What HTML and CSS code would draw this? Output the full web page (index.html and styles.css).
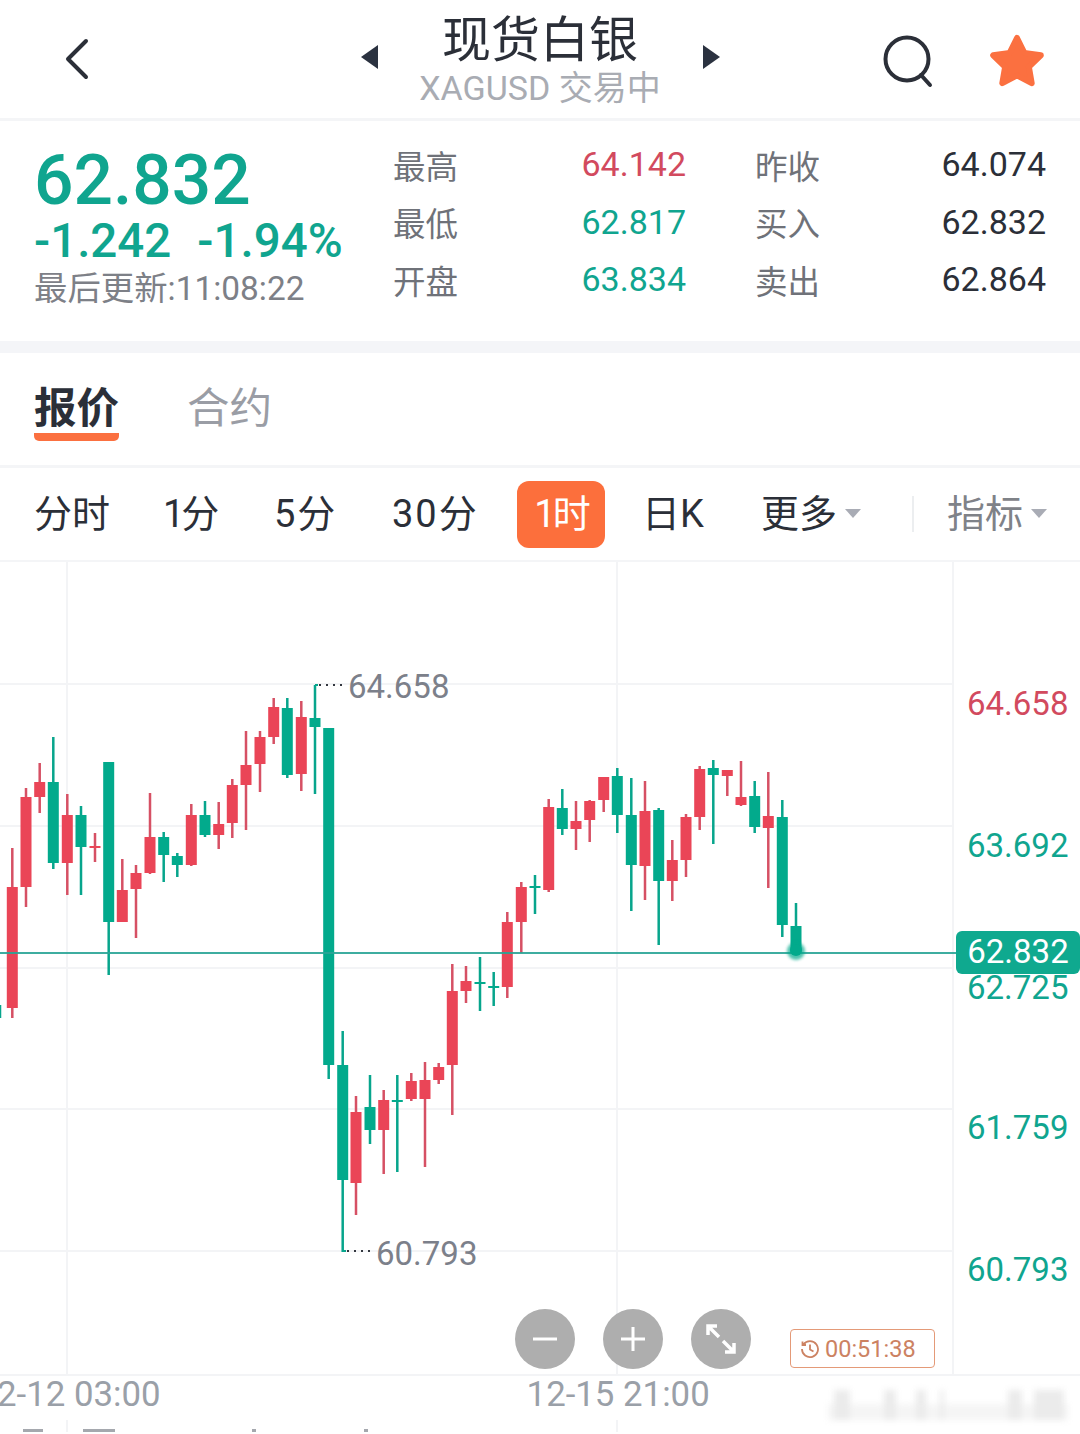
FILE: index.html
```html
<!DOCTYPE html>
<html lang="zh-CN">
<head>
    <meta charset="UTF-8">
    <meta name="viewport" content="width=device-width, initial-scale=1.0">
    <title>现货白银</title>
    <link rel="stylesheet" href="styles.css">
</head>
<body>

    <!-- Header -->
    <header class="top-bar">
        <svg class="icon-back" viewBox="0 0 28 44"><path d="M22 4 4 22l18 18"/></svg>
        <div class="title-group">
            <svg class="arrow" viewBox="0 0 17 24"><path d="M17 0V24L0 12Z"/></svg>
            <div class="title-text">
                <h1>现货白银</h1>
                <p>XAGUSD 交易中</p>
            </div>
            <svg class="arrow" viewBox="0 0 17 24"><path d="M0 0V24L17 12Z"/></svg>
        </div>
        <div class="top-actions">
            <svg class="icon-search" viewBox="0 0 52 54"><circle cx="24" cy="24" r="21.5"/><path d="M38 40 47 50"/></svg>
            <svg class="icon-star" viewBox="0 0 54 56"><path d="M27 5 34.3 19.9 50.8 22.3 38.9 33.9 41.7 50.2 27 42.5 12.3 50.2 15.1 33.9 3.2 22.3 19.7 19.9Z"/></svg>
        </div>
    </header>

    <!-- Quote -->
    <section class="quote">
        <div class="quote-main">
            <div class="price">62.832</div>
            <div class="change"><span>-1.242</span><span>-1.94%</span></div>
            <div class="updated">最后更新:11:08:22</div>
        </div>
        <div class="stats">
            <div class="stat"><span>最高</span><b class="up">64.142</b></div>
            <div class="stat"><span>昨收</span><b>64.074</b></div>
            <div class="stat"><span>最低</span><b class="down">62.817</b></div>
            <div class="stat"><span>买入</span><b>62.832</b></div>
            <div class="stat"><span>开盘</span><b class="down">63.834</b></div>
            <div class="stat"><span>卖出</span><b>62.864</b></div>
        </div>
    </section>

    <!-- Tabs -->
    <nav class="tabs">
        <a class="tab active">报价</a>
        <a class="tab">合约</a>
    </nav>

    <!-- Period -->
    <nav class="periods">
        <a>分时</a>
        <a class="narrow">1分</a>
        <a class="wide">5分</a>
        <a class="wide">30分</a>
        <a class="active narrow">1时</a>
        <a>日K</a>
        <a class="more">更多<i class="caret"></i></a>
        <span class="divider"></span>
        <a class="more muted">指标<i class="caret"></i></a>
    </nav>

    <!-- Chart: viewBox uses page coordinates -->
    <section class="chart">
        <svg class="chart-svg" viewBox="0 562 1080 812">
            <path class="grid" d="M0 684H953M0 826H953M0 968H953M0 1109H953M0 1251H953M67 562V1374M617 562V1374M953 562V1374"/>

            <path class="wick red" d="M12.3 848V1018M26 788V907M39.7 763V813M67.3 794V895M95 833V862M122.3 859V922M136 865V938M150 793V874M191.3 804V866M218.7 802V849M232.3 779V838M246 731V830M260 731V792M273.7 698V744M301.3 701V791M356 1096V1215M383.7 1090V1174M411.3 1073V1101M425 1062V1167M438.7 1063V1084M452.3 964V1115M466 966V1003M507.3 912V998M521.3 882V953M548.7 799V892M576 801V850M589.7 800V842M603.7 777V812M645 781V900M672.3 840V901M686 814V877M699.7 766V830M727.3 770V796M741 761V806M768.3 772V888"/>
            <path class="body red" d="M12.3 887V1008M26 797V887M39.7 782V797M67.3 815V863M95 846V848M122.3 890V922M136 873V889M150 837V873M191.3 815V865M218.7 824V835M232.3 785V823M246 765V785M260 737V764M273.7 707V737M301.3 717V774M356 1112V1183M383.7 1100V1130M411.3 1081V1099M425 1080V1099M438.7 1067V1080M452.3 991V1065M466 981V991M507.3 922V987M521.3 887V922M548.7 807V890M576 821V829M589.7 801V820M603.7 777V800M645 811V866M672.3 860V881M686 817V860M699.7 769V817M727.3 770V776M741 797V805M768.3 816V828"/>

            <path class="wick green" d="M0 1005V1018M53.3 737V869M81 806V895M108.7 922V975M163.7 832V882M177.3 853V877M205 801V837M287.3 698V778M315 685V794M328.7 1065V1079M342.7 1031V1252M370 1075V1144M397.3 1075V1172M480 957V1011M493.7 972V1006M535 875V914M562.3 789V835M617.3 768V833M631.3 778V911M658.7 808V945M713.3 760V844M754.7 781V833M782.3 800V937M796 903V953"/>
            <path class="body green" d="M53.3 782V863M81 815V847M108.7 762V922M163.7 837V855M177.3 856V865M205 815V835M287.3 708V775M315 718V727M328.7 728V1065M342.7 1065V1180M370 1107V1130M397.3 1100V1102M480 982V984M493.7 986V988M535 886V888M562.3 808V829M617.3 776V815M631.3 815V865M658.7 810V881M713.3 768V775M754.7 796V827M782.3 817V925M796 926V953"/>

            <path class="leader" d="M319 685H345M347 1251H372"/>
            <path class="corner" d="M315 685H318M343 1251H346"/>
            <text class="extreme" x="348" y="698">64.658</text>
            <text class="extreme" x="376" y="1265">60.793</text>

            <line class="last-line" x1="0" y1="953" x2="960" y2="953"/>
            <circle class="glow" cx="796" cy="951" r="9"/>
            <circle class="dot" cx="796" cy="950" r="6"/>

            <text class="axis up" x="967" y="715">64.658</text>
            <text class="axis down" x="967" y="857">63.692</text>
            <text class="axis down" x="967" y="999">62.725</text>
            <text class="axis down" x="967" y="1139">61.759</text>
            <text class="axis down" x="967" y="1281">60.793</text>
        </svg>

        <div class="last-tag">62.832</div>

        <div class="zoom-btn minus"><svg viewBox="0 0 60 60"><path d="M18 30H42"/></svg></div>
        <div class="zoom-btn plus"><svg viewBox="0 0 60 60"><path d="M18 30H42M30 18V42"/></svg></div>
        <div class="zoom-btn expand"><svg viewBox="0 0 60 60"><path d="M18 18 28 28M17 26V17H26M32 32 42 42M43 34V43H34"/></svg></div>

        <div class="timer">
            <svg viewBox="0 0 20 20"><path d="M3.5 5.5A8 8 0 1 1 2 10M2.5 2.5V6H6M10 5.5V10.5L13.5 12.5"/></svg>
            <span>00:51:38</span>
        </div>
    </section>

    <!-- Time axis -->
    <footer class="time-axis">
        <span class="time-left">2-12 03:00</span>
        <span class="time-mid">12-15 21:00</span>
        <div class="watermark"><i></i><i></i><i></i><i></i><i></i><i></i><i></i></div>
    </footer>

    <div class="next-panel">
        <i class="v-line l1"></i>
        <i class="v-line l2"></i>
        <i class="sliver s1"></i>
        <i class="sliver s2"></i>
        <i class="sliver s3"></i>
        <i class="sliver s4"></i>
    </div>

</body>
</html>
```

FILE: styles.css
```css
/* General */
* {
    margin: 0;
    padding: 0;
    box-sizing: border-box;
}

body {
    width: 1080px;
    height: 1434px;
    overflow: hidden;
    background: #fff;
    color: #2b2f38;
    font-family: Roboto, "Noto Sans CJK SC", sans-serif;
}

/* Header */
.top-bar {
    height: 121px;
    display: grid;
    grid-template-columns: 1fr auto 1fr;
    align-items: center;
    border-bottom: 3px solid #f4f5f7;
}

.icon-back {
    width: 28px;
    height: 44px;
    margin: 0 0 0 64px;
    fill: none;
    stroke: #2b2f38;
    stroke-width: 4;
    stroke-linecap: round;
    stroke-linejoin: round;
}

.title-group {
    display: flex;
    align-items: center;
    gap: 41px;
}

.arrow {
    width: 17px;
    height: 24px;
    margin-top: -4px;
    fill: #2b3240;
}

.title-text {
    width: 243px;
    margin-top: 4px;
    text-align: center;
}

.title-text h1 {
    font-size: 49px;
    line-height: 54px;
    font-weight: 400;
}

.title-text p {
    font-size: 34px;
    line-height: 40px;
    color: #a9acb3;
    white-space: nowrap;
}

.top-actions {
    display: flex;
    justify-content: flex-end;
    align-items: center;
    gap: 55px;
    padding-right: 36px;
}

.icon-search {
    width: 52px;
    height: 54px;
    margin-top: 6px;
    fill: none;
    stroke: #2b2f38;
    stroke-width: 4;
    stroke-linecap: round;
}

.icon-star {
    width: 54px;
    height: 56px;
    margin-top: 4px;
    fill: #fb7040;
    stroke: #fb7040;
    stroke-width: 6;
    stroke-linejoin: round;
}

/* Quote */
.quote {
    height: 232px;
    display: flex;
    padding: 16px 34px 0 34px;
    border-bottom: 12px solid #f4f5f8;
}

.quote-main {
    width: 359px;
    color: #10a58f;
}

.price {
    font-size: 69.5px;
    line-height: 70px;
    font-weight: 500;
    margin-top: 9px;
}

.change {
    display: flex;
    gap: 26px;
    font-size: 47.5px;
    line-height: 50px;
    font-weight: 500;
}

.updated {
    font-size: 33.4px;
    line-height: 46px;
    color: #7d8087;
    white-space: nowrap;
}

.stats {
    display: grid;
    grid-template-columns: 293px 291px;
    column-gap: 69px;
    grid-auto-rows: 57.5px;
}

.stat {
    display: flex;
    justify-content: space-between;
    align-items: center;
}

.stat span {
    font-size: 32.5px;
    color: #6f7279;
    margin-bottom: 3px;
}

.stat b {
    font-size: 34px;
    font-weight: 400;
    color: #2b2f38;
    margin-top: -3px;
}

.stat b.up {
    color: #d24a5e;
}

.stat b.down {
    color: #10a58f;
}

/* Tabs */
.tabs {
    height: 115px;
    display: flex;
    gap: 68px;
    padding: 29px 0 0 34px;
    border-bottom: 3px solid #f4f5f7;
}

.tab {
    height: 59px;
    font-size: 42.5px;
    line-height: 54px;
    color: #9a9da5;
}

.tab.active {
    color: #2b2f38;
    font-weight: 700;
    border-bottom: 8px solid #fb7040;
    border-radius: 0 0 5px 5px;
}

/* Period */
.periods {
    height: 94px;
    display: grid;
    grid-template-columns: 129px 111px 118px 125px 125px 119px 151px 35px auto;
    align-items: center;
    padding-left: 34px;
    border-bottom: 2px solid #f4f5f7;
    font-size: 38px;
    white-space: nowrap;
}

.periods a {
    margin-bottom: 8px;
}

.periods .narrow {
    letter-spacing: -3px;
}

.periods .wide {
    letter-spacing: 2px;
}

.periods .active {
    width: 88px;
    height: 67px;
    margin: 0;
    line-height: 67px;
    text-align: center;
    border-radius: 12px;
    background: #fc6f3c;
    color: #fff;
}

.more {
    display: flex;
    align-items: center;
    gap: 8px;
}

.more.muted {
    color: #7f8288;
}

.caret {
    width: 0;
    height: 0;
    margin-top: 6px;
    border-left: 8px solid transparent;
    border-right: 8px solid transparent;
    border-top: 9px solid #a9acb5;
}

.divider {
    width: 2px;
    height: 36px;
    background: #eceef0;
}

/* Chart */
.chart {
    position: relative;
    height: 812px;
}

.chart-svg {
    display: block;
    width: 1080px;
    height: 812px;
}

.grid {
    fill: none;
    stroke: #f3f4f6;
    stroke-width: 2;
}

.wick {
    fill: none;
    stroke-width: 2.5;
}

.body {
    fill: none;
    stroke-width: 11;
}

.wick.red {
    stroke: #d65064;
}

.body.red {
    stroke: #ea4557;
}

.wick.green {
    stroke: #07a58c;
}

.body.green {
    stroke: #02aa8c;
}

.leader {
    fill: none;
    stroke: #33373f;
    stroke-width: 2;
    stroke-dasharray: 2 5;
}

.corner {
    fill: none;
    stroke: #07a58c;
    stroke-width: 2;
}

.extreme {
    font-size: 33px;
    fill: #7c808a;
}

.axis {
    font-size: 33px;
}

.axis.up {
    fill: #d24a5e;
}

.axis.down {
    fill: #10a58f;
}

.last-line {
    stroke: #2aa596;
    stroke-width: 2;
    opacity: 0.9;
}

.glow {
    fill: #02aa8c;
    opacity: 0.7;
    filter: blur(1.5px);
}

.dot {
    fill: #02aa8c;
}

.last-tag {
    position: absolute;
    left: 956px;
    top: 369px;
    width: 124px;
    height: 43px;
    border-radius: 6px;
    background: #0fa98f;
    color: #fff;
    font-size: 33px;
    line-height: 42px;
    text-align: center;
}

.zoom-btn {
    position: absolute;
    top: 747px;
    width: 60px;
    height: 60px;
    border-radius: 50%;
    background: #aeaeae;
}

.zoom-btn svg {
    display: block;
    fill: none;
    stroke: #fff;
    stroke-width: 3;
}

.zoom-btn.minus {
    left: 515px;
}

.zoom-btn.plus {
    left: 603px;
}

.zoom-btn.expand {
    left: 691px;
}

.zoom-btn.expand svg {
    stroke-width: 3.5;
}

.timer {
    position: absolute;
    left: 790px;
    top: 767px;
    width: 145px;
    height: 39px;
    display: flex;
    align-items: center;
    gap: 5px;
    padding-left: 9px;
    border: 1.5px solid #e49a78;
    border-radius: 4px;
    color: #cc8262;
    font-size: 23.5px;
}

.timer svg {
    width: 20px;
    height: 20px;
    fill: none;
    stroke: #cc8262;
    stroke-width: 1.8;
}

/* Time axis */
.time-axis {
    position: relative;
    height: 46px;
    display: flex;
    align-items: flex-start;
    border-top: 2px solid #f3f4f6;
    font-size: 34.8px;
    line-height: 36px;
    color: #9aa0a8;
    white-space: nowrap;
}

.time-left {
    margin-left: -3px;
}

.time-mid {
    margin-left: 366px;
}

.watermark {
    position: absolute;
    left: 828px;
    top: 14px;
    width: 240px;
    height: 30px;
    filter: blur(3px);
}

.watermark i {
    position: absolute;
    top: 0;
    height: 30px;
    background: #ebebeb;
}

.watermark i:nth-child(1) { left: 0; top: 14px; width: 240px; height: 16px; background: #f5f5f5; }
.watermark i:nth-child(2) { left: 6px; width: 16px; }
.watermark i:nth-child(3) { left: 56px; width: 12px; }
.watermark i:nth-child(4) { left: 88px; width: 10px; }
.watermark i:nth-child(5) { left: 112px; width: 4px; }
.watermark i:nth-child(6) { left: 180px; width: 14px; }
.watermark i:nth-child(7) { left: 206px; width: 30px; }

/* Edge of the panel below */
.next-panel {
    position: relative;
    height: 12px;
}

.v-line {
    position: absolute;
    top: 0;
    bottom: 0;
    width: 2px;
    background: #f3f4f6;
}

.l1 { left: 66px; }
.l2 { left: 616px; }

.sliver {
    position: absolute;
    bottom: 0;
    height: 3px;
    background: #a5a8ae;
}

.s1 { left: 23px; width: 20px; }
.s2 { left: 83px; width: 32px; }
.s3 { left: 252px; width: 4px; }
.s4 { left: 364px; width: 4px; }
```
